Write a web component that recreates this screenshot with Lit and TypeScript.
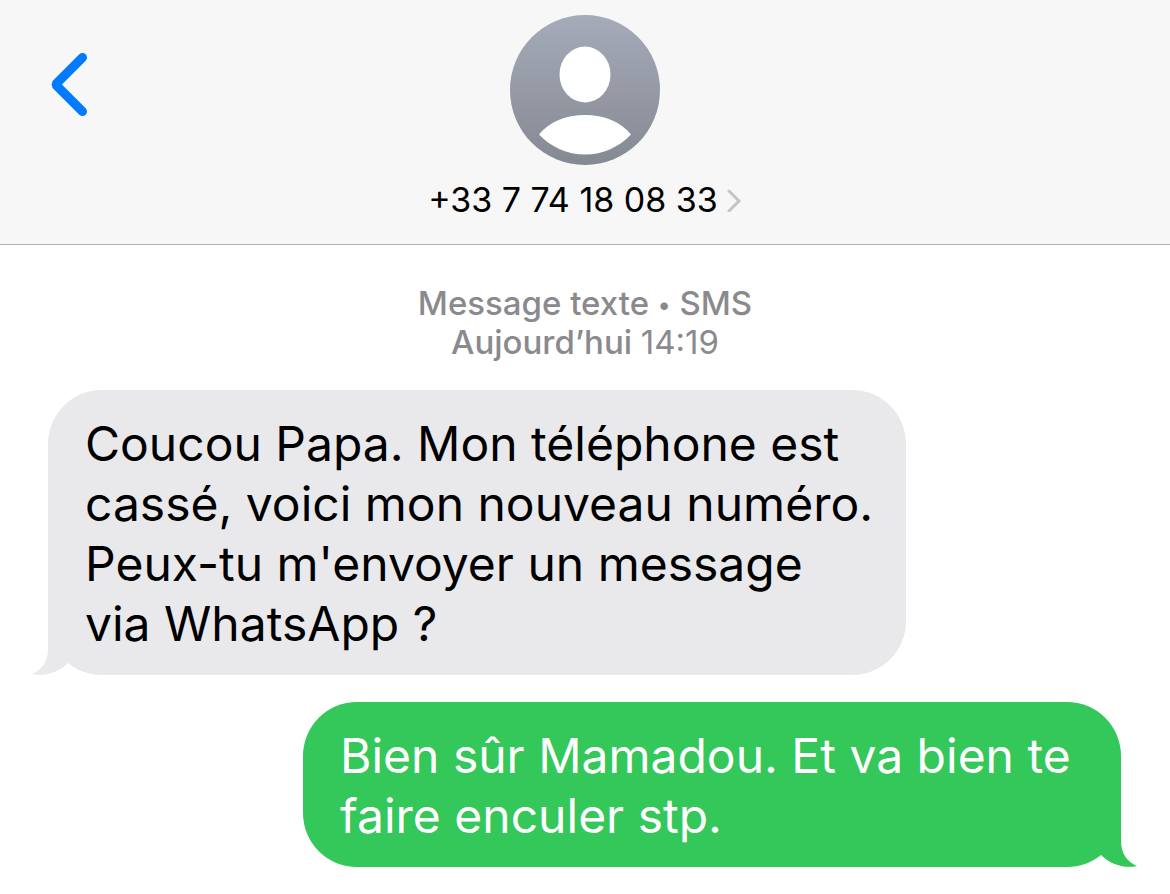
import { LitElement, html, css } from "lit";
import { customElement, property } from "lit/decorators.js";

@customElement("message-bubble")
class MessageBubble extends LitElement {
  @property({ type: Boolean, reflect: true }) sent = false;

  static styles = css`
    :host {
      display: block;
      position: relative;
      box-sizing: border-box;
      max-width: 858px;
      padding: 24px 28px 21px 37px;
      border-radius: 54px;
      background: #e9e9eb;
      color: #000;
      align-self: flex-start;
      font-size: 48px;
      line-height: 60px;
    }
    :host([sent]) {
      align-self: flex-end;
      max-width: 818px;
      background: #34c759;
      color: #fff;
    }
    .tail {
      position: absolute;
      bottom: 0;
      left: -16px;
      width: 36px;
      height: 54px;
      fill: #e9e9eb;
    }
    :host([sent]) .tail {
      left: auto;
      right: -16px;
      fill: #34c759;
      transform: scaleX(-1);
    }
  `;

  render() {
    return html`
      <svg class="tail" viewBox="0 0 36 54" aria-hidden="true">
        <path d="M16 0V28C16 40 10 49 0 53C13 56 27 51 36 42V0Z" />
      </svg>
      <slot></slot>
    `;
  }
}

@customElement("app-root")
class AppRoot extends LitElement {
  static styles = css`
    :host {
      display: block;
      min-height: 100vh;
      background: #fff;
      font-family: Inter, "Liberation Sans", sans-serif;
    }
    header {
      display: grid;
      grid-template-columns: 1fr auto 1fr;
      align-items: start;
      padding: 15px 50px 24px;
      background: #f7f7f7;
      border-bottom: 1px solid #b2b2b2;
    }
    button {
      border: 0;
      padding: 0;
      background: none;
      font: inherit;
      color: inherit;
      cursor: pointer;
    }
    svg {
      display: block;
    }
    .back {
      justify-self: start;
      margin-top: 37px;
    }
    .contact {
      display: flex;
      flex-direction: column;
      align-items: center;
      gap: 15px;
    }
    .number {
      display: flex;
      align-items: center;
      gap: 9px;
      font-size: 34px;
      line-height: 40px;
      color: #000;
    }
    .stamp {
      margin: 39px 0 28px;
      text-align: center;
      font-size: 33px;
      line-height: 39px;
      font-weight: 500;
      color: #8a8a8e;
    }
    .stamp time {
      font-weight: 400;
    }
    .dot {
      font-size: 24px;
      line-height: 1;
      vertical-align: 2px;
    }
    .thread {
      display: flex;
      flex-direction: column;
      gap: 27px;
      padding: 0 49px 27px 48px;
    }
  `;

  render() {
    return html`
      <header>
        <button class="back" aria-label="Retour">
          <svg width="38" height="64" viewBox="0 0 38 64" fill="none" stroke="#007aff" stroke-width="9" stroke-linecap="round" stroke-linejoin="bevel">
            <path d="M32.5 5.5L5.5 32.5L32.5 59.5" />
            <path d="M4.5 31.2L3 32.5L4.5 33.8" stroke-width="3" stroke-linejoin="round" />
          </svg>
        </button>
        <button class="contact">
          <svg width="150" height="150" viewBox="0 0 150 150" aria-hidden="true">
            <defs>
              <linearGradient id="avatar" x1="0" y1="0" x2="0" y2="1">
                <stop offset="0" stop-color="#a5abb9" />
                <stop offset="1" stop-color="#858992" />
              </linearGradient>
            </defs>
            <circle cx="75" cy="75" r="75" fill="url(#avatar)" />
            <ellipse cx="75" cy="59.5" rx="25.5" ry="28" fill="#fff" />
            <path d="M29 119.500C39 107 56 100 75 100S111 107 121 119.500C109 132 93 139.500 75 139.500S41 132 29 119.500Z" fill="#fff" />
          </svg>
          <span class="number">
            +33 7 74 18 08 33
            <svg width="15" height="24" viewBox="0 0 15 24" fill="none" stroke="#c5c5c7" stroke-width="3" stroke-linecap="round" stroke-linejoin="miter" aria-hidden="true">
              <path d="M2 3L12 13L2 23" />
            </svg>
          </span>
        </button>
        <span></span>
      </header>
      <main>
        <p class="stamp">Message texte <span class="dot">•</span> SMS<br />Aujourd’hui <time>14:19</time></p>
        <section class="thread">
          <message-bubble>Coucou Papa. Mon téléphone est cassé, voici mon nouveau numéro. Peux-tu m'envoyer un message via WhatsApp ?</message-bubble>
          <message-bubble sent>Bien sûr Mamadou. Et va bien te faire enculer stp.</message-bubble>
        </section>
      </main>
    `;
  }
}
